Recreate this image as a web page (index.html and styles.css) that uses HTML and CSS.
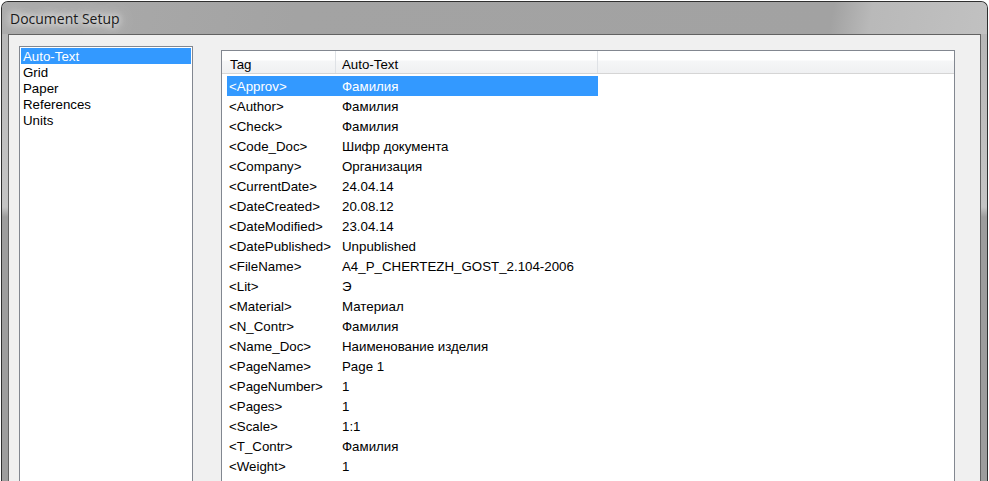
FILE: index.html
```html
<!DOCTYPE html>
<html lang="ru">
<head>
<meta charset="utf-8">
<title>Document Setup</title>
<link rel="stylesheet" href="styles.css">
</head>
<body>
<div class="window">
  <div class="titlebar"><span class="title">Document Setup</span></div>
  <div class="client">
    <div class="listbox">
      <div class="li sel">Auto-Text</div>
      <div class="li">Grid</div>
      <div class="li">Paper</div>
      <div class="li">References</div>
      <div class="li">Units</div>
    </div>
    <div class="listview">
      <div class="lv-header">
        <div class="hc hc-tag">Tag</div>
        <div class="hc hc-text">Auto-Text</div>
        <div class="hc hc-fill"></div>
      </div>
      <div class="lv-body">
        <div class="row sel"><span class="c-tag">&lt;Approv&gt;</span><span class="c-text">Фамилия</span></div>
        <div class="row"><span class="c-tag">&lt;Author&gt;</span><span class="c-text">Фамилия</span></div>
        <div class="row"><span class="c-tag">&lt;Check&gt;</span><span class="c-text">Фамилия</span></div>
        <div class="row"><span class="c-tag">&lt;Code_Doc&gt;</span><span class="c-text">Шифр документа</span></div>
        <div class="row"><span class="c-tag">&lt;Company&gt;</span><span class="c-text">Организация</span></div>
        <div class="row"><span class="c-tag">&lt;CurrentDate&gt;</span><span class="c-text">24.04.14</span></div>
        <div class="row"><span class="c-tag">&lt;DateCreated&gt;</span><span class="c-text">20.08.12</span></div>
        <div class="row"><span class="c-tag">&lt;DateModified&gt;</span><span class="c-text">23.04.14</span></div>
        <div class="row"><span class="c-tag">&lt;DatePublished&gt;</span><span class="c-text">Unpublished</span></div>
        <div class="row"><span class="c-tag">&lt;FileName&gt;</span><span class="c-text">A4_P_CHERTEZH_GOST_2.104-2006</span></div>
        <div class="row"><span class="c-tag">&lt;Lit&gt;</span><span class="c-text">Э</span></div>
        <div class="row"><span class="c-tag">&lt;Material&gt;</span><span class="c-text">Материал</span></div>
        <div class="row"><span class="c-tag">&lt;N_Contr&gt;</span><span class="c-text">Фамилия</span></div>
        <div class="row"><span class="c-tag">&lt;Name_Doc&gt;</span><span class="c-text">Наименование изделия</span></div>
        <div class="row"><span class="c-tag">&lt;PageName&gt;</span><span class="c-text">Page 1</span></div>
        <div class="row"><span class="c-tag">&lt;PageNumber&gt;</span><span class="c-text">1</span></div>
        <div class="row"><span class="c-tag">&lt;Pages&gt;</span><span class="c-text">1</span></div>
        <div class="row"><span class="c-tag">&lt;Scale&gt;</span><span class="c-text">1:1</span></div>
        <div class="row"><span class="c-tag">&lt;T_Contr&gt;</span><span class="c-text">Фамилия</span></div>
        <div class="row"><span class="c-tag">&lt;Weight&gt;</span><span class="c-text">1</span></div>
      </div>
    </div>
  </div>
</div>
</body>
</html>
```

FILE: styles.css
```css
html, body {
  margin: 0;
  height: 100%;
  overflow: hidden;
  background: #ffffff;
}

body {
  font-family: "Liberation Sans", Arial, sans-serif;
  font-size: 13.3px;
  color: #000;
}

.window {
  box-sizing: border-box;
  width: 987px;
  height: 620px;
  margin: 1px 0 0 1px;
  border: 1px solid #2f2f2f;
  border-bottom: none;
  border-radius: 7px 7px 0 0;
  overflow: hidden;
  padding: 0 6px;
  display: flex;
  flex-direction: column;
  background: linear-gradient(to bottom, #b4b4b4 0, #c2c2c2 170px, #c4c4c4 205px, #9d9d9d 215px, #9d9d9d 100%);
}

.titlebar {
  height: 32px;
  margin: 0 -6px;
  padding-left: 8px;
  display: flex;
  align-items: center;
  flex-shrink: 0;
  background: linear-gradient(100deg, #ababab 0%, #a3a3a3 30%, #a2a2a2 84%, #b9b9b9 88%, #c1c1c1 100%);
}

.title {
  font-family: "Open Sans", "Noto Sans", sans-serif;
  font-size: 14px;
  color: #1a1a1a;
  padding-top: 1px;
  text-shadow: 0 0 6px rgba(255,255,255,1), 0 0 12px rgba(255,255,255,0.9), 0 0 20px rgba(255,255,255,0.8);
}

.client {
  flex: 1;
  border: 1px solid #626262;
  border-bottom: none;
  background: #f0f0f0;
  padding-left: 10px;
  display: flex;
  align-items: flex-start;
}

.listbox {
  box-sizing: border-box;
  width: 174px;
  height: 560px;
  margin-top: 11px;
  border: 1px solid #828790;
  background: #fff;
  padding: 1px;
}

.li {
  box-sizing: border-box;
  height: 16px;
  padding-top: 2px;
  line-height: 14px;
  padding-left: 2px;
  white-space: nowrap;
}

.li.sel {
  background: #3399ff;
  color: #fff;
}

.listview {
  box-sizing: border-box;
  width: 734px;
  height: 560px;
  margin-top: 15px;
  margin-left: 28px;
  border: 1px solid #828790;
  background: #fff;
}

.lv-header {
  display: flex;
  height: 22px;
  border-bottom: 1px solid #d5d5d5;
  background: linear-gradient(to bottom, #ffffff 0, #ffffff 9px, #f5f6f7 10px, #eff0f2 100%);
}

.hc {
  box-sizing: border-box;
  height: 22px;
  padding-top: 5px;
  line-height: 17px;
  white-space: nowrap;
}

.hc-tag {
  width: 114px;
  padding-left: 8px;
  border-right: 1px solid #dfe2e6;
}

.hc-text {
  width: 262px;
  padding-left: 6px;
  border-right: 1px solid #dfe2e6;
}

.hc-fill {
  flex: 1;
}

.lv-body {
  padding-top: 2px;
}

.row {
  box-sizing: border-box;
  display: flex;
  width: 371px;
  height: 20px;
  padding-top: 2px;
  line-height: 18px;
  margin-left: 5px;
  white-space: nowrap;
}

.row.sel {
  background: #3399ff;
  color: #fff;
}

.c-tag {
  box-sizing: border-box;
  width: 109px;
  padding-left: 2px;
}

.c-text {
  box-sizing: border-box;
  width: 262px;
  padding-left: 6px;
}
```
